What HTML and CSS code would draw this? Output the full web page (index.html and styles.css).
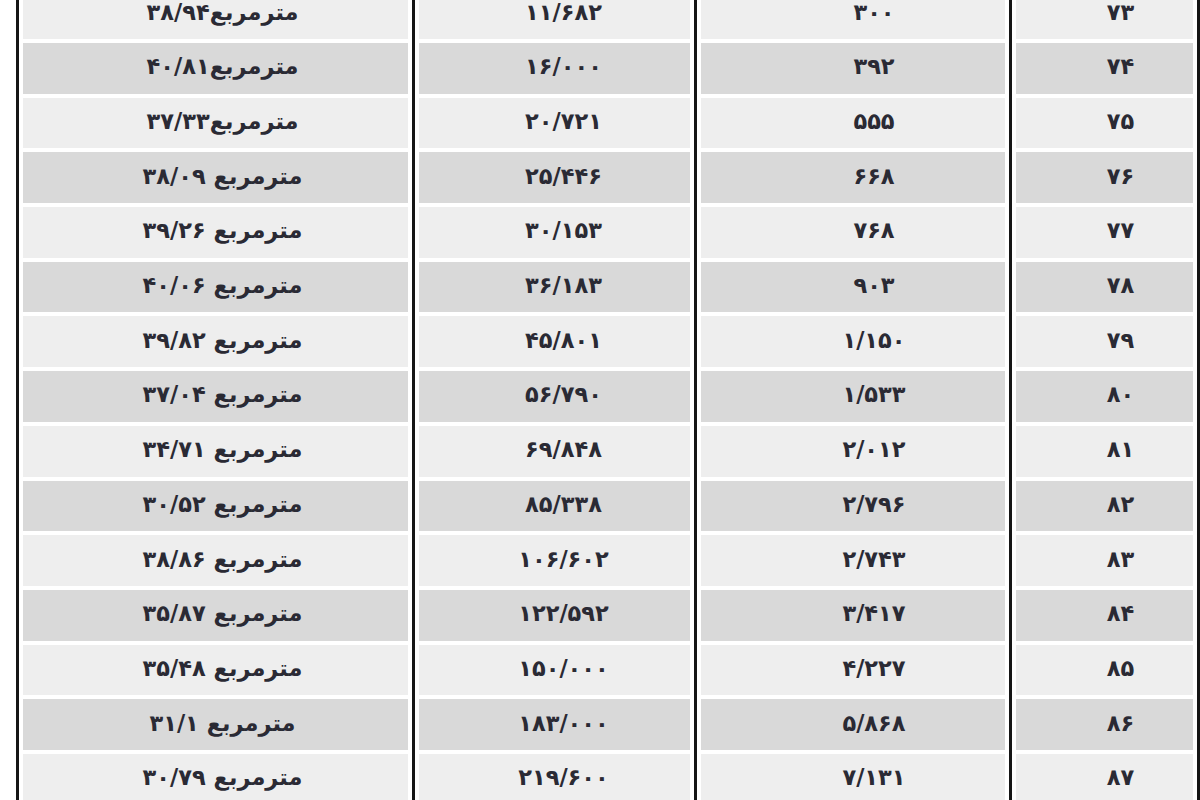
FILE: index.html
```html
<!DOCTYPE html>
<html lang="fa" dir="rtl">
<head>
<meta charset="utf-8">
<title>جدول</title>
<link rel="stylesheet" href="styles.css">
</head>
<body>
<div class="table">
  <div class="row light"><div class="cell c1"><div class="box">۷۳</div></div><div class="cell c2"><div class="box">۳۰۰</div></div><div class="cell c3"><div class="box">۱۱/۶۸۲</div></div><div class="cell c4"><div class="box">مترمربع۳۸/۹۴</div></div></div>
  <div class="row gray"><div class="cell c1"><div class="box">۷۴</div></div><div class="cell c2"><div class="box">۳۹۲</div></div><div class="cell c3"><div class="box">۱۶/۰۰۰</div></div><div class="cell c4"><div class="box">مترمربع۴۰/۸۱</div></div></div>
  <div class="row light"><div class="cell c1"><div class="box">۷۵</div></div><div class="cell c2"><div class="box">۵۵۵</div></div><div class="cell c3"><div class="box">۲۰/۷۲۱</div></div><div class="cell c4"><div class="box">مترمربع۳۷/۳۳</div></div></div>
  <div class="row gray"><div class="cell c1"><div class="box">۷۶</div></div><div class="cell c2"><div class="box">۶۶۸</div></div><div class="cell c3"><div class="box">۲۵/۴۴۶</div></div><div class="cell c4"><div class="box">مترمربع ۳۸/۰۹</div></div></div>
  <div class="row light"><div class="cell c1"><div class="box">۷۷</div></div><div class="cell c2"><div class="box">۷۶۸</div></div><div class="cell c3"><div class="box">۳۰/۱۵۳</div></div><div class="cell c4"><div class="box">مترمربع ۳۹/۲۶</div></div></div>
  <div class="row gray"><div class="cell c1"><div class="box">۷۸</div></div><div class="cell c2"><div class="box">۹۰۳</div></div><div class="cell c3"><div class="box">۳۶/۱۸۳</div></div><div class="cell c4"><div class="box">مترمربع ۴۰/۰۶</div></div></div>
  <div class="row light"><div class="cell c1"><div class="box">۷۹</div></div><div class="cell c2"><div class="box">۱/۱۵۰</div></div><div class="cell c3"><div class="box">۴۵/۸۰۱</div></div><div class="cell c4"><div class="box">مترمربع ۳۹/۸۲</div></div></div>
  <div class="row gray"><div class="cell c1"><div class="box">۸۰</div></div><div class="cell c2"><div class="box">۱/۵۳۳</div></div><div class="cell c3"><div class="box">۵۶/۷۹۰</div></div><div class="cell c4"><div class="box">مترمربع ۳۷/۰۴</div></div></div>
  <div class="row light"><div class="cell c1"><div class="box">۸۱</div></div><div class="cell c2"><div class="box">۲/۰۱۲</div></div><div class="cell c3"><div class="box">۶۹/۸۴۸</div></div><div class="cell c4"><div class="box">مترمربع ۳۴/۷۱</div></div></div>
  <div class="row gray"><div class="cell c1"><div class="box">۸۲</div></div><div class="cell c2"><div class="box">۲/۷۹۶</div></div><div class="cell c3"><div class="box">۸۵/۳۳۸</div></div><div class="cell c4"><div class="box">مترمربع ۳۰/۵۲</div></div></div>
  <div class="row light"><div class="cell c1"><div class="box">۸۳</div></div><div class="cell c2"><div class="box">۲/۷۴۳</div></div><div class="cell c3"><div class="box">۱۰۶/۶۰۲</div></div><div class="cell c4"><div class="box">مترمربع ۳۸/۸۶</div></div></div>
  <div class="row gray"><div class="cell c1"><div class="box">۸۴</div></div><div class="cell c2"><div class="box">۳/۴۱۷</div></div><div class="cell c3"><div class="box">۱۲۲/۵۹۲</div></div><div class="cell c4"><div class="box">مترمربع ۳۵/۸۷</div></div></div>
  <div class="row light"><div class="cell c1"><div class="box">۸۵</div></div><div class="cell c2"><div class="box">۴/۲۲۷</div></div><div class="cell c3"><div class="box">۱۵۰/۰۰۰</div></div><div class="cell c4"><div class="box">مترمربع ۳۵/۴۸</div></div></div>
  <div class="row gray"><div class="cell c1"><div class="box">۸۶</div></div><div class="cell c2"><div class="box">۵/۸۶۸</div></div><div class="cell c3"><div class="box">۱۸۳/۰۰۰</div></div><div class="cell c4"><div class="box">مترمربع ۳۱/۱</div></div></div>
  <div class="row light"><div class="cell c1"><div class="box">۸۷</div></div><div class="cell c2"><div class="box">۷/۱۳۱</div></div><div class="cell c3"><div class="box">۲۱۹/۶۰۰</div></div><div class="cell c4"><div class="box">مترمربع ۳۰/۷۹</div></div></div>
</div>
</body>
</html>
```

FILE: styles.css
```css
html, body {
  margin: 0;
  padding: 0;
  background: #ffffff;
  overflow: hidden;
}

body {
  width: 1200px;
  height: 800px;
  font-family: "DejaVu Sans", "Noto Sans", sans-serif;
  font-weight: bold;
  font-size: 22.5px;
  color: #2a2a34;
}

.table {
  direction: rtl;
  width: 1184px;
  margin-left: 7px;
  margin-top: -13.7px;
  display: flex;
  flex-direction: column;
}

.row {
  display: grid;
  grid-template-columns: 191px 315px 282px 396px;
  height: 54.7px;
}

.cell {
  box-sizing: border-box;
  border-left: 3px solid #151515;
  padding: 2px 4px;
  display: flex;
}

.cell.c1 {
  border-right: 3px solid #151515;
}

.box {
  flex: 1;
  display: flex;
  align-items: center;
  justify-content: center;
  padding-bottom: 4px;
  white-space: nowrap;
  letter-spacing: 0.5px;
}

.light .box { background: #eeeeee; }
.gray .box { background: #d9d9d9; }

.c1 .box { padding-left: 32px; }
.c2 .box { padding-left: 42px; }
.c3 .box { padding-left: 18px; }
.c4 .box { padding-left: 14px; }
```
